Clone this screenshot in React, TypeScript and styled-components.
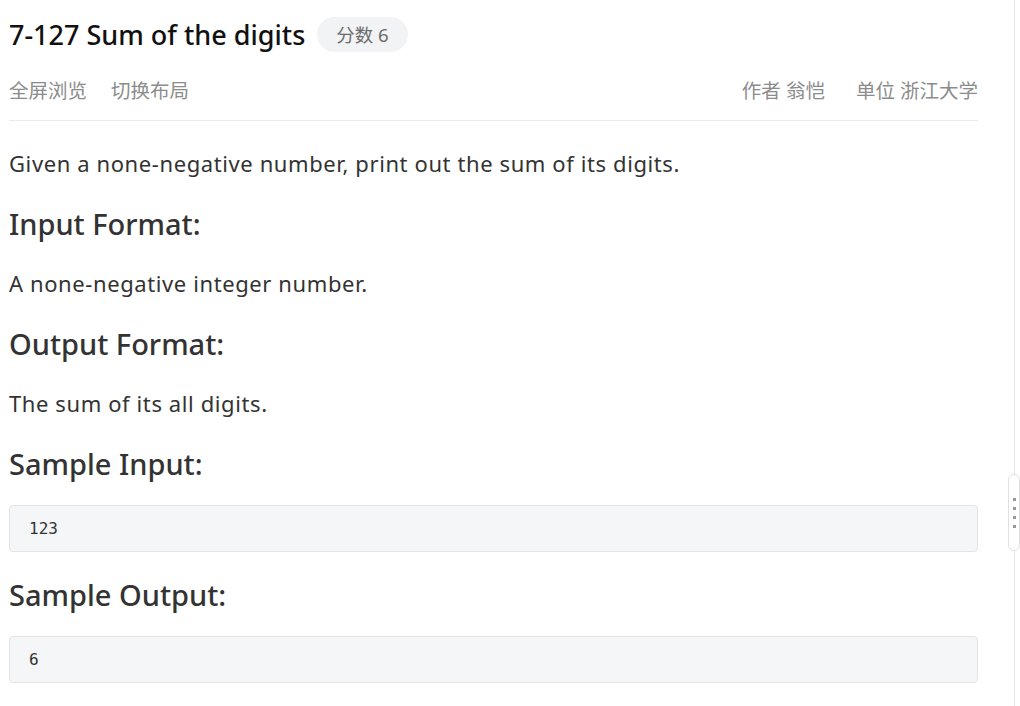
import React from "react";
import styled, { createGlobalStyle } from "styled-components";

const Global = createGlobalStyle`
  html, body { margin: 0; padding: 0; background: #fff; }
  body { font-family: "Noto Sans", "Noto Sans CJK SC", sans-serif; overflow: hidden; }
`;

const Page = styled.div`
  display: flex;
  width: 1020px;
  height: 706px;
  overflow: hidden;
`;

const Main = styled.main`
  width: 1014px;
  box-sizing: border-box;
  padding: 0 36px 0 9px;
  flex-shrink: 0;
`;

const Side = styled.aside`
  position: relative;
  flex: 1;
  border-left: 1px solid #e6e6e6;
`;

const Handle = styled.div`
  position: absolute;
  left: -7px;
  top: 474px;
  width: 12px;
  height: 77px;
  box-sizing: border-box;
  border: 1px solid #e0e0e0;
  border-radius: 6px;
  background: #fff;
  display: flex;
  flex-direction: column;
  align-items: center;
  justify-content: center;
  gap: 6px;
`;

const Dot = styled.span`
  width: 3px;
  height: 3px;
  background: #999;
`;

const TitleRow = styled.div`
  display: flex;
  align-items: center;
  gap: 12px;
  height: 68px;
`;

const Title = styled.h1`
  margin: 0;
  font-size: 27px;
  font-weight: 500;
  color: #111;
`;

const Badge = styled.span`
  display: inline-flex;
  align-items: center;
  height: 35px;
  padding: 0 19px;
  border-radius: 18px;
  background: #f2f3f5;
  color: #6b6b6b;
  font-size: 18.5px;
`;

const NavRow = styled.div`
  display: flex;
  align-items: flex-start;
  justify-content: space-between;
  height: 53px;
  box-sizing: border-box;
  padding-top: 9px;
  border-bottom: 1px solid #ebebeb;
`;

const NavGroup = styled.div<{ $gap: number }>`
  display: flex;
  gap: ${(p) => p.$gap}px;
`;

const NavItem = styled.span`
  color: #8c8c8c;
  font-size: 19.5px;
  line-height: 28px;
`;

const Content = styled.div`
  display: flex;
  flex-direction: column;
  padding-top: 23px;
  color: #333;
`;

const Para = styled.p`
  margin: 0 0 22px;
  font-size: 22px;
  letter-spacing: 0.6px;
  line-height: 38px;
`;

const Heading = styled.h3`
  margin: 0 0 20px;
  font-size: 29px;
  font-weight: 500;
  line-height: 40px;
`;

const Code = styled.pre`
  margin: 1px 0 23px;
  height: 47px;
  box-sizing: border-box;
  padding: 0 19px;
  display: flex;
  align-items: center;
  background: #f5f6f7;
  border: 1px solid #e4e4e4;
  border-radius: 4px;
  font-family: "DejaVu Sans Mono", monospace;
  font-size: 16px;
  color: #333;
`;

export default function App() {
  return (
    <>
      <Global />
      <Page>
        <Main>
          <TitleRow>
            <Title>7-127 Sum of the digits</Title>
            <Badge>分数 6</Badge>
          </TitleRow>
          <NavRow>
            <NavGroup $gap={24}>
              <NavItem>全屏浏览</NavItem>
              <NavItem>切换布局</NavItem>
            </NavGroup>
            <NavGroup $gap={31}>
              <NavItem>作者 翁恺</NavItem>
              <NavItem>单位 浙江大学</NavItem>
            </NavGroup>
          </NavRow>
          <Content>
            <Para>Given a none-negative number, print out the sum of its digits.</Para>
            <Heading>Input Format:</Heading>
            <Para>A none-negative integer number.</Para>
            <Heading>Output Format:</Heading>
            <Para>The sum of its all digits.</Para>
            <Heading>Sample Input:</Heading>
            <Code>123</Code>
            <Heading>Sample Output:</Heading>
            <Code>6</Code>
          </Content>
        </Main>
        <Side>
          <Handle>
            <Dot />
            <Dot />
            <Dot />
            <Dot />
          </Handle>
        </Side>
      </Page>
    </>
  );
}
